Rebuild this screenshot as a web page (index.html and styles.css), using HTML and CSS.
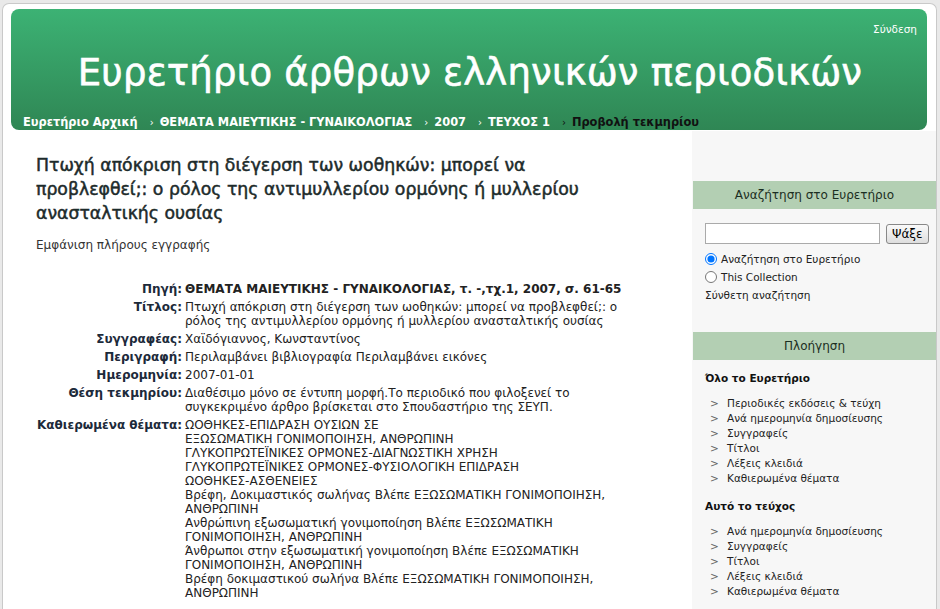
FILE: index.html
```html
<!DOCTYPE html>
<html lang="el">
<head>
  <meta charset="UTF-8">
  <title>Ευρετήριο άρθρων ελληνικών περιοδικών</title>
  <link rel="stylesheet" href="styles.css">
</head>
<body>
  <div class="page">
    <div class="header">
      <div class="login"><a href="#">Σύνδεση</a></div>
      <h1>Ευρετήριο άρθρων ελληνικών περιοδικών</h1>
      <ul class="trail">
        <li><a href="#">Ευρετήριο Αρχική</a></li>
        <li><span class="sep">›</span><a href="#">ΘΕΜΑΤΑ ΜΑΙΕΥΤΙΚΗΣ - ΓΥΝΑΙΚΟΛΟΓΙΑΣ</a></li>
        <li><span class="sep">›</span><a href="#">2007</a></li>
        <li><span class="sep">›</span><a href="#">ΤΕΥΧΟΣ 1</a></li>
        <li class="current"><span class="sep">›</span>Προβολή τεκμηρίου</li>
      </ul>
    </div>

    <div class="content">
      <div class="main">
        <h2>Πτωχή απόκριση στη διέγερση των ωοθηκών: μπορεί να προβλεφθεί;: ο ρόλος της αντιμυλλερίου ορμόνης ή μυλλερίου ανασταλτικής ουσίας</h2>
        <p class="full-link"><a href="#">Εμφάνιση πλήρους εγγραφής</a></p>

        <table class="meta">
          <tr>
            <th>Πηγή:</th>
            <td class="source">ΘΕΜΑΤΑ ΜΑΙΕΥΤΙΚΗΣ - ΓΥΝΑΙΚΟΛΟΓΙΑΣ, τ. -,τχ.1, 2007, σ. 61-65</td>
          </tr>
          <tr>
            <th>Τίτλος:</th>
            <td>Πτωχή απόκριση στη διέγερση των ωοθηκών: μπορεί να προβλεφθεί;: ο ρόλος της αντιμυλλερίου ορμόνης ή μυλλερίου ανασταλτικής ουσίας</td>
          </tr>
          <tr>
            <th>Συγγραφέας:</th>
            <td>Χαϊδόγιαννος, Κωνσταντίνος</td>
          </tr>
          <tr>
            <th>Περιγραφή:</th>
            <td>Περιλαμβάνει βιβλιογραφία Περιλαμβάνει εικόνες</td>
          </tr>
          <tr>
            <th>Ημερομηνία:</th>
            <td>2007-01-01</td>
          </tr>
          <tr>
            <th>Θέση τεκμηρίου:</th>
            <td>Διαθέσιμο μόνο σε έντυπη μορφή.Το περιοδικό που φιλοξενεί το συγκεκριμένο άρθρο βρίσκεται στο Σπουδαστήριο της ΣΕΥΠ.</td>
          </tr>
          <tr>
            <th>Καθιερωμένα θέματα:</th>
            <td>
              <div>ΩΟΘΗΚΕΣ-ΕΠΙΔΡΑΣΗ ΟΥΣΙΩΝ ΣΕ</div>
              <div>ΕΞΩΣΩΜΑΤΙΚΗ ΓΟΝΙΜΟΠΟΙΗΣΗ, ΑΝΘΡΩΠΙΝΗ</div>
              <div>ΓΛΥΚΟΠΡΩΤΕΪΝΙΚΕΣ ΟΡΜΟΝΕΣ-ΔΙΑΓΝΩΣΤΙΚΗ ΧΡΗΣΗ</div>
              <div>ΓΛΥΚΟΠΡΩΤΕΪΝΙΚΕΣ ΟΡΜΟΝΕΣ-ΦΥΣΙΟΛΟΓΙΚΗ ΕΠΙΔΡΑΣΗ</div>
              <div>ΩΟΘΗΚΕΣ-ΑΣΘΕΝΕΙΕΣ</div>
              <div>Βρέφη, Δοκιμαστικός σωλήνας Βλέπε ΕΞΩΣΩΜΑΤΙΚΗ ΓΟΝΙΜΟΠΟΙΗΣΗ, ΑΝΘΡΩΠΙΝΗ</div>
              <div>Ανθρώπινη εξωσωματική γονιμοποίηση Βλέπε ΕΞΩΣΩΜΑΤΙΚΗ ΓΟΝΙΜΟΠΟΙΗΣΗ, ΑΝΘΡΩΠΙΝΗ</div>
              <div>Άνθρωποι στην εξωσωματική γονιμοποίηση Βλέπε ΕΞΩΣΩΜΑΤΙΚΗ ΓΟΝΙΜΟΠΟΙΗΣΗ, ΑΝΘΡΩΠΙΝΗ</div>
              <div>Βρέφη δοκιμαστικού σωλήνα Βλέπε ΕΞΩΣΩΜΑΤΙΚΗ ΓΟΝΙΜΟΠΟΙΗΣΗ, ΑΝΘΡΩΠΙΝΗ</div>
            </td>
          </tr>
        </table>
      </div>

      <div class="sidebar">
        <h3>Αναζήτηση στο Ευρετήριο</h3>
        <form class="search">
          <div class="search-row">
            <input type="text" class="query">
            <button type="button">Ψάξε</button>
          </div>
          <label class="scope"><input type="radio" name="scope" checked> Αναζήτηση στο Ευρετήριο</label>
          <label class="scope"><input type="radio" name="scope"> This Collection</label>
          <a href="#" class="advanced">Σύνθετη αναζήτηση</a>
        </form>

        <h3>Πλοήγηση</h3>
        <div class="browse">
          <h4>Όλο το Ευρετήριο</h4>
          <ul>
            <li><a href="#">Περιοδικές εκδόσεις &amp; τεύχη</a></li>
            <li><a href="#">Ανά ημερομηνία δημοσίευσης</a></li>
            <li><a href="#">Συγγραφείς</a></li>
            <li><a href="#">Τίτλοι</a></li>
            <li><a href="#">Λέξεις κλειδιά</a></li>
            <li><a href="#">Καθιερωμένα θέματα</a></li>
          </ul>
          <h4>Αυτό το τεύχος</h4>
          <ul>
            <li><a href="#">Ανά ημερομηνία δημοσίευσης</a></li>
            <li><a href="#">Συγγραφείς</a></li>
            <li><a href="#">Τίτλοι</a></li>
            <li><a href="#">Λέξεις κλειδιά</a></li>
            <li><a href="#">Καθιερωμένα θέματα</a></li>
          </ul>
        </div>
      </div>
    </div>
  </div>
</body>
</html>
```

FILE: styles.css
```css
html, body {
  margin: 0;
  padding: 0;
}
body {
  font-family: "DejaVu Sans", Verdana, sans-serif;
  background-color: #e9e9e9;
  color: #222;
  height: 609px;
  overflow: hidden;
}
a {
  text-decoration: none;
  color: inherit;
}
.page {
  margin: 3px 3px 0 2px;
  background-color: #fff;
  border: 1px solid #c9c9c9;
  border-bottom: none;
  border-radius: 7px 7px 0 0;
  height: 605px;
  overflow: hidden;
}

/* header */
.header {
  margin: 5px 9px 0 8px;
  height: 121px;
  border-radius: 8px;
  background: linear-gradient(#3cb274, #2f8654);
  color: #fff;
  box-sizing: border-box;
  padding: 13px 10px 0 12px;
}
.login {
  text-align: right;
  font-size: 10.5px;
  line-height: 14px;
}
h1 {
  margin: 14px 0 0 0;
  font-size: 37px;
  font-weight: normal;
  text-align: center;
  line-height: 46px;
  letter-spacing: 0.2px;
  -webkit-text-stroke: 0.6px #fff;
}
.trail {
  list-style: none;
  margin: 18px 0 0 0;
  padding: 0;
  display: flex;
  font-size: 11.4px;
  font-weight: bold;
  line-height: 16px;
}
.trail li {
  margin-right: 6px;
}
.trail .sep {
  font-weight: normal;
  margin: 0 6px 0 6px;
  font-size: 10px;
}
.trail .current {
  color: #111;
}

/* body */
.content {
  display: flex;
  margin-top: 1px;
  height: 478px;
}
.main {
  flex: 1;
  padding: 22px 20px 0 33px;
}
h2 {
  margin: 0;
  font-size: 17.3px;
  line-height: 24px;
  font-weight: normal;
  -webkit-text-stroke: 0.5px #1d2b2b;
  color: #1d2b2b;
  width: 590px;
}
.full-link {
  font-size: 12px;
  color: #333;
  margin: 13px 0 0 0;
}
.meta {
  margin-top: 28px;
  border-collapse: collapse;
  font-size: 12px;
  line-height: 14px;
}
.meta th {
  text-align: right;
  vertical-align: top;
  white-space: nowrap;
  color: #1c2a3a;
  padding: 2px 3px 2px 0;
  width: 146px;
}
.meta td {
  vertical-align: top;
  padding: 2px 0 2px 0;
  color: #222;
  width: 446px;
}
.meta td.source {
  font-weight: bold;
}

/* sidebar */
.sidebar {
  width: 244px;
  background-color: #f7f7f7;
  padding-top: 50px;
  font-size: 10.5px;
}
h3 {
  margin: 0 0 0 1px;
  background-color: #b3cfb3;
  color: #1b2e22;
  font-size: 12px;
  font-weight: normal;
  text-align: center;
  line-height: 28px;
}
.search {
  padding: 14px 10px 28px 13px;
  display: flex;
  flex-direction: column;
}
.search-row {
  display: flex;
  gap: 6px;
  align-items: center;
}
.query {
  width: 175px;
  height: 21px;
  box-sizing: border-box;
  border: 1px solid #aaa;
  margin: 0;
}
.search-row button {
  height: 20px;
  padding: 0 5px;
  font-family: "DejaVu Sans", Verdana, sans-serif;
  font-size: 12px;
  border: 1px solid #888;
  border-radius: 3px;
  background: linear-gradient(#fafafa, #dedede);
}
.scope {
  display: flex;
  align-items: center;
  line-height: 18px;
  color: #222;
}
.scope input {
  margin: 0 4px 0 0;
  width: 12px;
  height: 12px;
}
.search-row + .scope {
  margin-top: 6px;
}
.advanced {
  line-height: 18px;
}
.browse {
  padding: 11px 10px 0 13px;
}
h4 {
  margin: 0;
  font-size: 10.5px;
  line-height: 14px;
  color: #111;
}
.browse ul {
  list-style: none;
  margin: 11px 0 13px 0;
  padding: 0;
}
.browse li {
  line-height: 15px;
}
.browse li::before {
  content: ">";
  color: #666;
  display: inline-block;
  width: 22px;
  padding-left: 5px;
  box-sizing: border-box;
}
```
